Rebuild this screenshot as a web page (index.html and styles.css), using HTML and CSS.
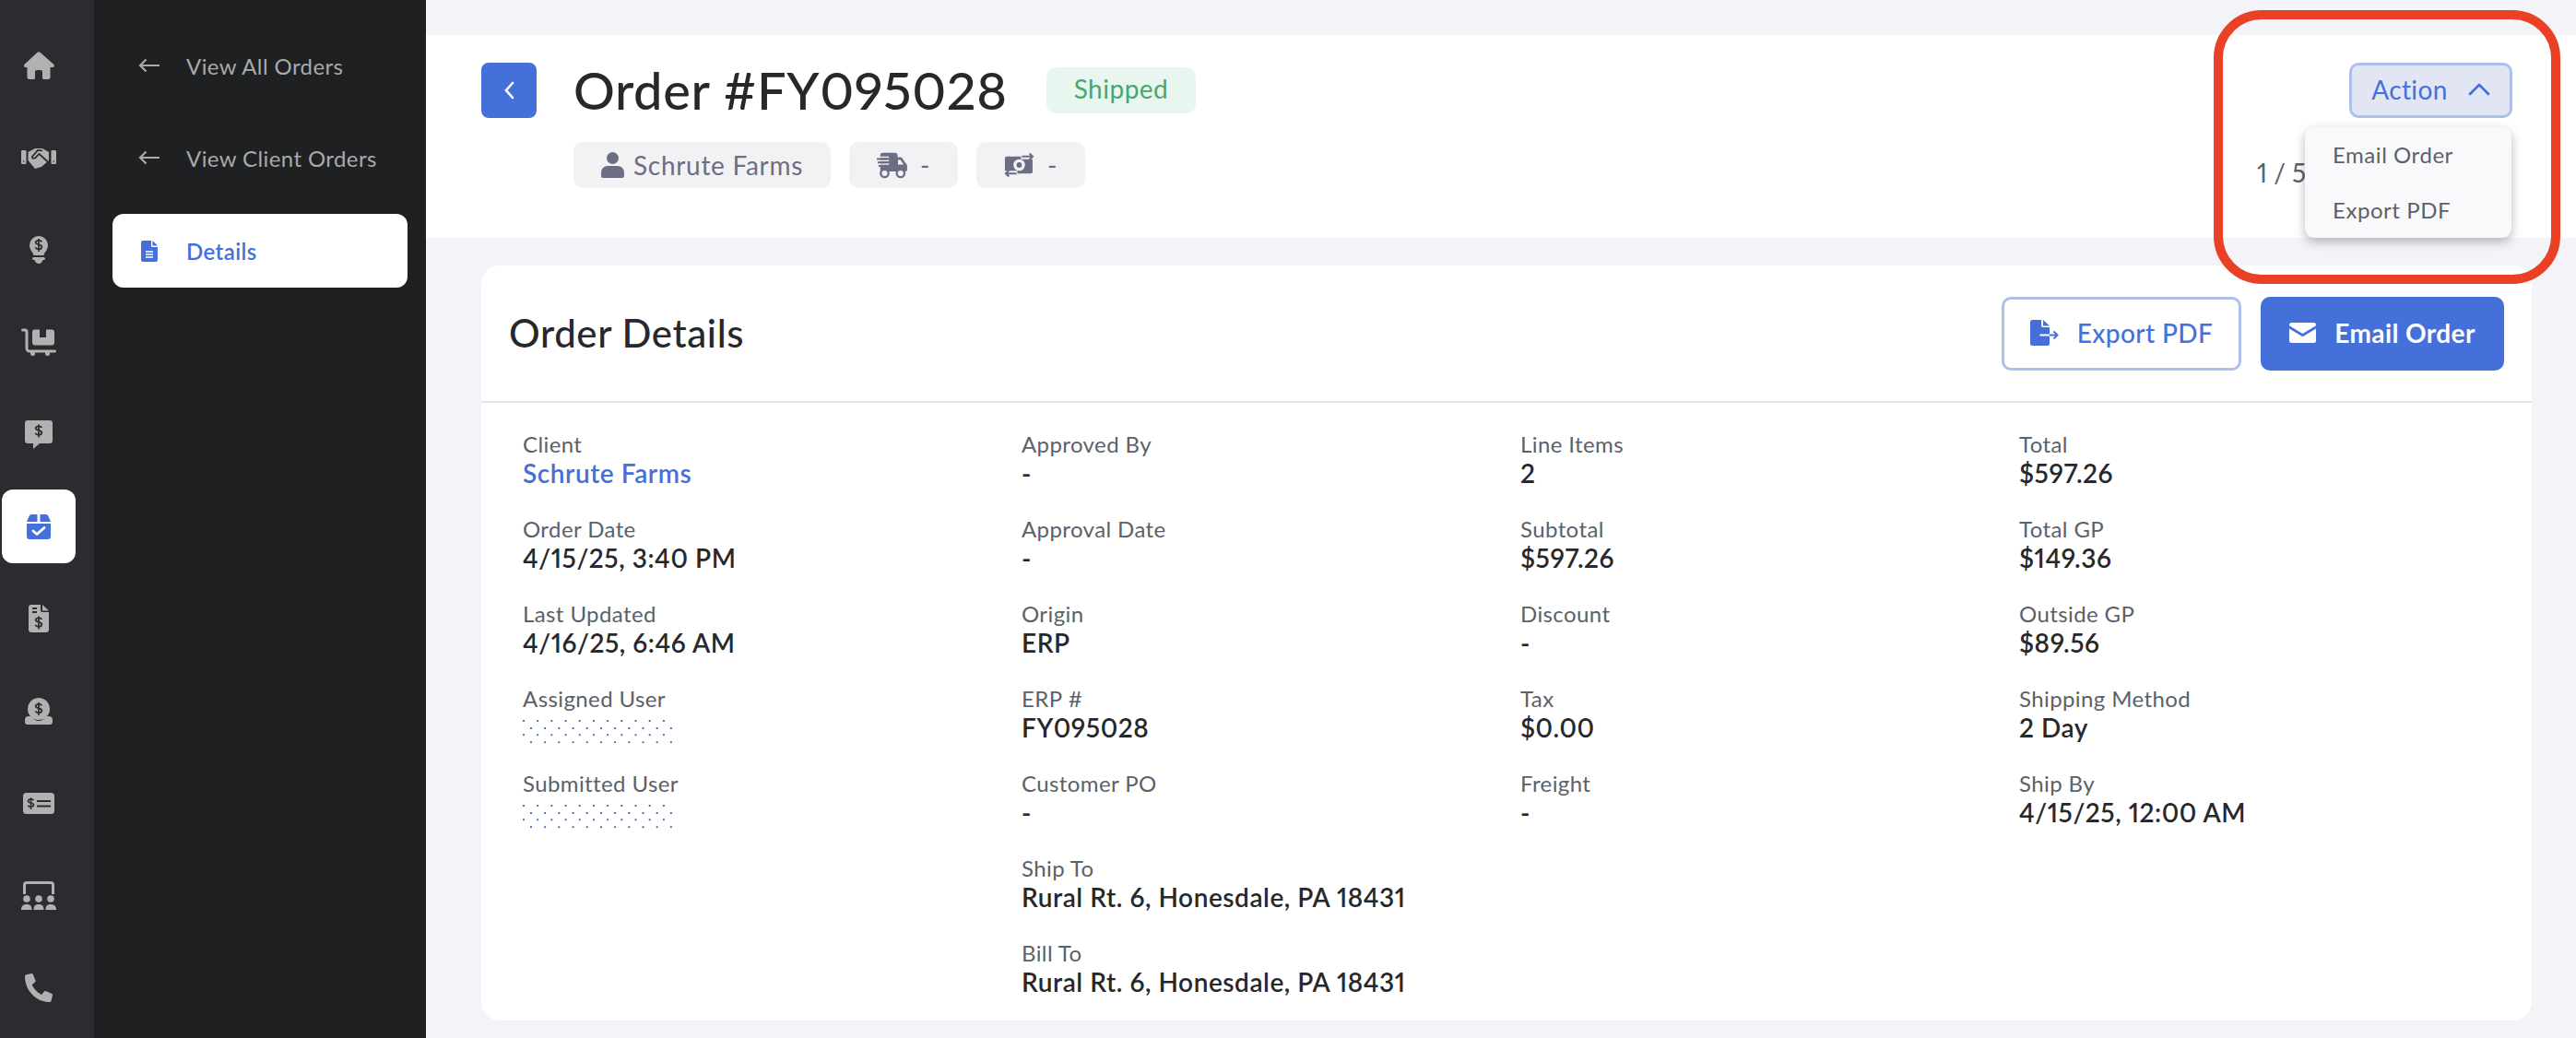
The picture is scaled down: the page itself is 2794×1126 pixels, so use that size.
FILE: index.html
```html
<!DOCTYPE html>
<html lang="en">
<head>
  <meta charset="UTF-8" />
  <title>Order #FY095028</title>
  <link rel="stylesheet" href="styles.css">
</head>
<body>

  <svg class="sprites" aria-hidden="true">
    <symbol id="dollar" viewBox="0 0 12 18">
      <path d="M10 4.6C9.4 3.4 8 2.8 6 2.8c-2.4 0-4 1-4 2.7 0 3.8 8 1.6 8 5.6 0 1.8-1.7 3-4.1 3-2.2 0-3.6-.8-4.3-2.2M6 .5v17" fill="none" stroke="currentColor" stroke-width="2.1"/>
    </symbol>
  </svg>

  <!-- rail -->
  <nav class="rail">
    <a class="rail-item">
      <svg width="34" height="30" viewBox="0 0 34 30"><path d="M15.6.8a2.2 2.2 0 0 1 2.8 0l14.8 13c1.3 1.200.5 3.200-1.200 3.200H29.500v10.500a2.500 2.500 0 0 1-2.500 2.500h-4.500a1.500 1.500 0 0 1-1.500-1.500V22a2 2 0 0 0-2-2h-4a2 2 0 0 0-2 2v6.500a1.500 1.500 0 0 1-1.500 1.500H7a2.500 2.500 0 0 1-2.500-2.500V17H2.800C1.100 17 .3 15 1.600 13.800z" fill="currentColor"/></svg>
    </a>
    <a class="rail-item">
      <svg width="38" height="23" viewBox="0 0 38 23"><rect y="3" width="5.500" height="15" rx="1.200" fill="currentColor"/><rect x="32.500" y="3" width="5.500" height="15" rx="1.200" fill="currentColor"/><circle cx="2.700" cy="15" r=".8" fill="#2b2c2f"/><circle cx="35.300" cy="15" r=".8" fill="#2b2c2f"/><path d="M7.500 5L15 1h8l7 4v9l-8 7-7 2-7.500-9z" fill="currentColor"/><path d="M11.500 10.500c1 2 4 1.500 5-.5l3-3 11 10M11.500 10.500L18 3l5 .5" fill="none" stroke="#2b2c2f" stroke-width="1.700"/></svg>
    </a>
    <a class="rail-item">
      <svg width="20" height="30" viewBox="0 0 20 30"><path d="M10 0a10 10 0 0 1 10 10c0 5-3.500 7-4.500 11h-11C3.500 17 0 15 0 10A10 10 0 0 1 10 0z" fill="currentColor"/><path d="M4.500 23h11a.8.8 0 0 1 0 3h-1c-.8 2.500-2.500 4-4.500 4s-3.700-1.500-4.500-4h-1a.8.8 0 0 1 0-3z" fill="currentColor"/><use href="#dollar" x="4.500" y="2.500" width="11" height="15" color="#2b2c2f"/></svg>
    </a>
    <a class="rail-item">
      <svg width="38" height="30" viewBox="0 0 38 30"><path d="M1.500 2H4a2 2 0 0 1 2 2v18a3 3 0 0 0 3 3h27.500" fill="none" stroke="currentColor" stroke-width="3" stroke-linecap="round"/><path d="M15 1.500h5V10h7V1.500h6a3 3 0 0 1 3 3v11a3 3 0 0 1-3 3H15a3 3 0 0 1-3-3v-11a3 3 0 0 1 3-3z" fill="currentColor"/><circle cx="12.500" cy="27.500" r="2.500" fill="currentColor"/><circle cx="28.500" cy="27.500" r="2.500" fill="currentColor"/></svg>
    </a>
    <a class="rail-item">
      <svg width="30" height="31" viewBox="0 0 30 31"><path d="M3 0h24a3 3 0 0 1 3 3v19a3 3 0 0 1-3 3H16l-7 6v-6H3a3 3 0 0 1-3-3V3a3 3 0 0 1 3-3z" fill="currentColor"/><use href="#dollar" x="9.500" y="4" width="11" height="15" color="#2b2c2f"/></svg>
    </a>
    <a class="rail-item rail-item-active">
      <svg width="26" height="27" viewBox="0 0 26 27"><path d="M5 0h6.500v8H0l2.500-6A3.500 3.500 0 0 1 5 0zM14.500 0H21a3.500 3.500 0 0 1 2.500 2L26 8H14.500zM0 10h26v14a3 3 0 0 1-3 3H3a3 3 0 0 1-3-3z" fill="currentColor"/><path d="M7 18l4 3.500 8-7" fill="none" stroke="#fff" stroke-width="2.800" stroke-linecap="round" stroke-linejoin="round"/></svg>
    </a>
    <a class="rail-item">
      <svg width="22" height="30" viewBox="0 0 22 30"><path d="M3 0h10v6a2 2 0 0 0 2 2h7v19a3 3 0 0 1-3 3H3a3 3 0 0 1-3-3V3a3 3 0 0 1 3-3zM15 0l7 6.500h-7z" fill="currentColor"/><path d="M4 4h5M4 8h5" stroke="#2b2c2f" stroke-width="1.800"/><use href="#dollar" x="6" y="12" width="10" height="15" color="#2b2c2f"/></svg>
    </a>
    <a class="rail-item">
      <svg width="30" height="29" viewBox="0 0 30 29"><circle cx="15" cy="12" r="12" fill="currentColor"/><path d="M4 20h3c2 3 5 5 8 5s6-2 8-5h3a4 4 0 0 1 4 4v2a3 3 0 0 1-3 3H3a3 3 0 0 1-3-3v-2a4 4 0 0 1 4-4z" fill="currentColor"/><use href="#dollar" x="10" y="4.500" width="10" height="15" color="#2b2c2f"/></svg>
    </a>
    <a class="rail-item">
      <svg width="34" height="23" viewBox="0 0 34 23"><rect width="34" height="23" rx="3.500" fill="currentColor"/><use href="#dollar" x="4" y="3" width="9" height="17" color="#2b2c2f"/><path d="M15 9h15M15 14.500h15" stroke="#2b2c2f" stroke-width="2.200"/></svg>
    </a>
    <a class="rail-item">
      <svg width="38" height="31" viewBox="0 0 38 31"><path d="M3.500 14V4a2.500 2.500 0 0 1 2.500-2.500h26A2.500 2.500 0 0 1 34.500 4v10" fill="none" stroke="currentColor" stroke-width="3"/><circle cx="6" cy="19" r="3.800" fill="currentColor"/><circle cx="19" cy="19" r="3.800" fill="currentColor"/><circle cx="32" cy="19" r="3.800" fill="currentColor"/><path d="M0 31c0-4 2-6 6-6s5.500 2 5.500 6zM13.500 31c0-4 1.500-6 5.500-6s5.500 2 5.500 6zM26.500 31c0-4 1.500-6 5.500-6s6 2 6 6z" fill="currentColor"/></svg>
    </a>
    <a class="rail-item">
      <svg width="30" height="31" viewBox="0 0 512 512" preserveAspectRatio="none"><path transform="translate(512 0) scale(-1 1)" d="M493.400 24.600l-104-24c-11.300-2.600-22.900 3.300-27.500 13.900l-48 112c-4.200 9.800-1.400 21.300 6.900 28l60.600 49.600c-36 76.700-98.900 140.500-177.200 177.200l-49.600-60.600c-6.800-8.300-18.200-11.100-28-6.900l-112 48C3.900 366.500-2 378.100.6 389.400l24 104C27.100 504.200 36.700 512 48 512c256.100 0 464-207.500 464-464 0-11.200-7.700-20.900-18.600-23.400z" fill="currentColor"/></svg>
    </a>
  </nav>

  <!-- sub nav -->
  <aside class="subnav">
    <a class="subnav-item">
      <svg class="subnav-icon" width="24" height="16" viewBox="0 0 24 16"><path d="M23 8H2M8.500 1.500L2 8l6.500 6.500" fill="none" stroke="currentColor" stroke-width="2.200"/></svg>
      View All Orders
    </a>
    <a class="subnav-item">
      <svg class="subnav-icon" width="24" height="16" viewBox="0 0 24 16"><path d="M23 8H2M8.500 1.500L2 8l6.500 6.500" fill="none" stroke="currentColor" stroke-width="2.200"/></svg>
      View Client Orders
    </a>
    <a class="subnav-item subnav-item-active">
      <svg class="subnav-icon" width="18" height="23" viewBox="0 0 18 23"><path d="M2 0h9v5.500A1.500 1.500 0 0 0 12.500 7H18v14a2 2 0 0 1-2 2H2a2 2 0 0 1-2-2V2a2 2 0 0 1 2-2zM12.500 0L18 5.500h-5.500z" fill="currentColor"/><path d="M5 12h8M5 15h8M5 18h8" stroke="#fff" stroke-width="1.300"/></svg>
      Details
    </a>
  </aside>

  <main class="main">
    <header class="order-head">
      <a class="back-btn">
        <svg width="12" height="20" viewBox="0 0 12 20"><path d="M10 2L3 10l7 8" fill="none" stroke="#fff" stroke-width="2.600" stroke-linecap="round"/></svg>
      </a>
      <div class="order-title-block">
        <div class="order-title-row">
          <h1>Order #FY095028</h1>
          <span class="badge-shipped">Shipped</span>
        </div>
        <div class="chips">
          <span class="chip chip-user">
            <svg width="25" height="28" viewBox="0 0 25 28"><circle cx="12.500" cy="6.500" r="6.500" fill="currentColor"/><path d="M7 15h11a7 7 0 0 1 7 7v4a2 2 0 0 1-2 2H2a2 2 0 0 1-2-2v-4a7 7 0 0 1 7-7z" fill="currentColor"/></svg>
            Schrute Farms
          </span>
          <span class="chip chip-small">
            <svg width="35" height="29" viewBox="0 0 35 29"><path d="M7 0h14a3 3 0 0 1 3 3v2h3.500a2 2 0 0 1 1.600.8l5 7a2 2 0 0 1 .9 1.700v5a2 2 0 0 1-2 2H6a2 2 0 0 1-2-2V3a3 3 0 0 1 3-3z" fill="currentColor"/><path d="M3 5h11M3 9h11M3 13h11" stroke="#f2f2f4" stroke-width="1.600"/><path d="M0 7h12M1 11h11M2 15h10" stroke="currentColor" stroke-width="2"/><path d="M24.500 8h2.800l3.700 5.500h-6.500z" fill="#f2f2f4"/><circle cx="9" cy="23.500" r="4.500" fill="#f2f2f4" stroke="currentColor" stroke-width="2.500"/><circle cx="27.500" cy="23.500" r="4.500" fill="#f2f2f4" stroke="currentColor" stroke-width="2.500"/></svg>
            -
          </span>
          <span class="chip chip-small">
            <svg width="34" height="28" viewBox="0 0 34 28"><rect x="1" y="4.500" width="31" height="19" rx="2" fill="currentColor"/><circle cx="17" cy="14" r="6.500" fill="#f2f2f4"/><circle cx="17" cy="14" r="3" fill="currentColor"/><path d="M19 4.500h15M0 23.500h15" stroke="#f2f2f4" stroke-width="6"/><path d="M20 4.500h12M28.500 1L32 4.500 28.500 8M14 23.500H2M5.500 20L2 23.500 5.500 27" fill="none" stroke="currentColor" stroke-width="2.200"/></svg>
            -
          </span>
        </div>
      </div>
      <div class="order-actions">
        <button class="action-btn">
          Action
          <svg width="24" height="14" viewBox="0 0 24 14"><path d="M2 12L12 2l10 10" fill="none" stroke="currentColor" stroke-width="2.800" stroke-linecap="round" stroke-linejoin="round"/></svg>
        </button>
        <div class="pager">1 / 5</div>
        <div class="action-menu">
          <a class="action-menu-item">Email Order</a>
          <a class="action-menu-item">Export PDF</a>
        </div>
      </div>
    </header>

    <section class="card">
      <div class="card-head">
        <h2>Order Details</h2>
        <div class="card-btns">
          <button class="btn btn-outline">
            <svg width="31" height="28" viewBox="0 0 31 28"><path d="M2.500 0H12v6a2 2 0 0 0 2 2h7v17.500a2.500 2.500 0 0 1-2.500 2.500h-16A2.500 2.500 0 0 1 0 25.500v-23A2.500 2.500 0 0 1 2.500 0zM14 0l7 6.500h-7z" fill="currentColor"/><path d="M10.500 16.500H21" stroke="#fff" stroke-width="2"/><path d="M21 16.500h8.500M25.500 12.500l4 4-4 4" fill="none" stroke="currentColor" stroke-width="2"/></svg>
            Export PDF
          </button>
          <button class="btn btn-primary">
            <svg width="29" height="22" viewBox="0 0 29 22"><path d="M2.500 0h24A2.500 2.500 0 0 1 29 2.500v.8L14.500 12 0 3.300v-.8A2.500 2.500 0 0 1 2.500 0zM0 6.500l14.500 8.700L29 6.500v13a2.500 2.500 0 0 1-2.500 2.500h-24A2.500 2.500 0 0 1 0 19.500z" fill="currentColor"/></svg>
            Email Order
          </button>
        </div>
      </div>

      <div class="details">
        <div class="details-col">
          <div class="field"><div class="field-label">Client</div><a class="field-value field-link">Schrute Farms</a></div>
          <div class="field"><div class="field-label">Order Date</div><div class="field-value">4/15/25, 3:40 PM</div></div>
          <div class="field"><div class="field-label">Last Updated</div><div class="field-value">4/16/25, 6:46 AM</div></div>
          <div class="field"><div class="field-label">Assigned User</div><div class="field-dots"></div></div>
          <div class="field"><div class="field-label">Submitted User</div><div class="field-dots"></div></div>
        </div>
        <div class="details-col">
          <div class="field"><div class="field-label">Approved By</div><div class="field-value">-</div></div>
          <div class="field"><div class="field-label">Approval Date</div><div class="field-value">-</div></div>
          <div class="field"><div class="field-label">Origin</div><div class="field-value">ERP</div></div>
          <div class="field"><div class="field-label">ERP #</div><div class="field-value">FY095028</div></div>
          <div class="field"><div class="field-label">Customer PO</div><div class="field-value">-</div></div>
          <div class="field"><div class="field-label">Ship To</div><div class="field-value">Rural Rt. 6, Honesdale, PA 18431</div></div>
          <div class="field"><div class="field-label">Bill To</div><div class="field-value">Rural Rt. 6, Honesdale, PA 18431</div></div>
        </div>
        <div class="details-col">
          <div class="field"><div class="field-label">Line Items</div><div class="field-value">2</div></div>
          <div class="field"><div class="field-label">Subtotal</div><div class="field-value">$597.26</div></div>
          <div class="field"><div class="field-label">Discount</div><div class="field-value">-</div></div>
          <div class="field"><div class="field-label">Tax</div><div class="field-value">$0.00</div></div>
          <div class="field"><div class="field-label">Freight</div><div class="field-value">-</div></div>
        </div>
        <div class="details-col">
          <div class="field"><div class="field-label">Total</div><div class="field-value">$597.26</div></div>
          <div class="field"><div class="field-label">Total GP</div><div class="field-value">$149.36</div></div>
          <div class="field"><div class="field-label">Outside GP</div><div class="field-value">$89.56</div></div>
          <div class="field"><div class="field-label">Shipping Method</div><div class="field-value">2 Day</div></div>
          <div class="field"><div class="field-label">Ship By</div><div class="field-value">4/15/25, 12:00 AM</div></div>
        </div>
      </div>
    </section>
  </main>

  <!-- red annotation over the screenshot -->
  <div class="annotation"></div>

</body>
</html>
```

FILE: styles.css
```css
:root {
  --azul: #4570d9;
  --azul-claro: #adc0ec;
  --cinza-texto: #5b6168;
  --preto-texto: #27282c;
  --fundo: #f3f3f8;
}

* {
  margin: 0;
  padding: 0;
  box-sizing: border-box;
}

body {
  font-family: Lato, "Noto Sans", Arial, sans-serif;
  font-variant-numeric: proportional-nums;
  background-color: var(--fundo);
  color: var(--preto-texto);
  display: flex;
  height: 1126px;
  overflow: hidden;
}

.sprites {
  display: none;
}

.rail {
  width: 102px;
  flex-shrink: 0;
  background-color: #2b2c2f;
  color: #b1b1b1;
  padding: 31px 20px 0 2px;
  display: flex;
  flex-direction: column;
  gap: 20px;
}

.rail-item {
  height: 80px;
  border-radius: 12px;
  display: flex;
  align-items: center;
  justify-content: center;
}

.rail-item-active {
  background-color: #fff;
  color: var(--azul);
}

.subnav {
  width: 360px;
  flex-shrink: 0;
  background-color: #1f2022;
  padding: 32px 20px 0;
  display: flex;
  flex-direction: column;
  gap: 20px;
}

.subnav-item {
  height: 80px;
  padding-bottom: 2px;
  border-radius: 12px;
  display: flex;
  align-items: center;
  padding-left: 28px;
  font-size: 24px;
  letter-spacing: 0.4px;
  color: #a9a9a9;
}

.subnav-icon {
  width: 24px;
  margin-right: 28px;
}

.subnav-item-active {
  background-color: #fff;
  color: var(--azul);
  font-weight: 600;
  padding-bottom: 0;
}

.main {
  flex: 1;
  min-width: 0;
  padding-top: 38px;
}

.order-head {
  height: 220px;
  background-color: #fff;
  display: flex;
  padding: 30px 69px 0 60px;
}

.back-btn {
  width: 60px;
  height: 60px;
  border-radius: 8px;
  background-color: var(--azul);
  display: flex;
  align-items: center;
  justify-content: center;
  margin-right: 40px;
}

.order-title-block {
  flex: 1;
}

.order-title-row {
  display: flex;
  align-items: center;
  height: 60px;
  gap: 42px;
}

h1 {
  font-size: 56px;
  font-weight: 500;
  line-height: 56px;
  letter-spacing: 0.6px;
}

.badge-shipped {
  height: 50px;
  padding: 0 30px;
  border-radius: 10px;
  background-color: #e9f5ef;
  color: #4aa56f;
  font-size: 28px;
  line-height: 47px;
  letter-spacing: 0.5px;
}

.chips {
  display: flex;
  gap: 20px;
  margin-top: 26px;
}

.chip {
  height: 50px;
  padding: 0 30px;
  border-radius: 10px;
  background-color: #f2f2f4;
  color: #6b6e85;
  font-size: 28px;
  letter-spacing: 0.7px;
  display: flex;
  align-items: center;
  gap: 14px;
}

.chip-user {
  gap: 10px;
}

.chip-small {
  width: 118px;
}

.order-actions {
  width: 277px;
  position: relative;
  display: flex;
  flex-direction: column;
}

.action-btn {
  align-self: flex-end;
  height: 60px;
  width: 177px;
  padding-bottom: 3px;
  border: 3px solid var(--azul-claro);
  border-radius: 10px;
  background-color: #e2e5f3;
  color: var(--azul);
  font-family: inherit;
  font-size: 28px;
  letter-spacing: 0.4px;
  display: flex;
  align-items: center;
  justify-content: center;
  gap: 22px;
}

.pager {
  margin-top: 40px;
  font-size: 28px;
  line-height: 38px;
  color: var(--cinza-texto);
}

.action-menu {
  position: absolute;
  top: 70px;
  right: 1px;
  width: 224px;
  height: 120px;
  border-radius: 10px;
  background-color: #f9f9fc;
  box-shadow: 0 4px 12px rgba(0, 0, 0, 0.28);
  z-index: 2;
}

.action-menu-item {
  display: block;
  height: 60px;
  line-height: 59px;
  padding-left: 30px;
  font-size: 24px;
  letter-spacing: 0.55px;
  color: var(--cinza-texto);
}

.card {
  margin: 30px 48px 0 60px;
  height: 819px;
  background-color: #fff;
  border-radius: 20px;
}

.card-head {
  height: 149px;
  border-bottom: 2px solid #e4e4ee;
  display: flex;
  align-items: center;
  justify-content: space-between;
  padding: 0 30px;
}

h2 {
  font-size: 42px;
  font-weight: 500;
  letter-spacing: 0.6px;
  padding-bottom: 2px;
}

.card-btns {
  display: flex;
  gap: 21px;
}

.btn {
  height: 80px;
  padding-bottom: 2px;
  border-radius: 10px;
  font-family: inherit;
  font-size: 28px;
  font-weight: 500;
  letter-spacing: 0.4px;
  display: flex;
  align-items: center;
  justify-content: center;
  gap: 20px;
}

.btn-outline {
  width: 260px;
  background-color: #fff;
  border: 3px solid var(--azul-claro);
  color: var(--azul);
}

.btn-primary {
  width: 264px;
  background-color: var(--azul);
  border: none;
  color: #fff;
  font-weight: 700;
}

.details {
  display: grid;
  grid-template-columns: repeat(4, 541px);
  padding: 30px 0 0 45px;
}

.details-col {
  display: flex;
  flex-direction: column;
  gap: 30px;
}

.field-label {
  font-size: 24px;
  line-height: 30px;
  letter-spacing: 0.4px;
  color: var(--cinza-texto);
}

.field-value {
  display: block;
  font-size: 28px;
  font-weight: 600;
  line-height: 32px;
  letter-spacing: 0.55px;
  color: var(--preto-texto);
}

.field-link {
  color: var(--azul);
}

/* valor borrado, só os pontinhos */
.field-dots {
  width: 165px;
  height: 28px;
  margin: 8px 0 -4px 0;
  background-image:
    radial-gradient(circle, #3a6ab8 1px, transparent 1.3px),
    radial-gradient(circle, #3a6ab8 1px, transparent 1.3px);
  background-size: 15.2px 15.2px;
  background-position: -6.6px -6.6px, 1.4px 1.4px;
}

.annotation {
  position: absolute;
  left: 2401px;
  top: 11px;
  width: 376px;
  height: 297px;
  border: 10px solid #ea4025;
  border-radius: 52px;
  z-index: 3;
}
```
